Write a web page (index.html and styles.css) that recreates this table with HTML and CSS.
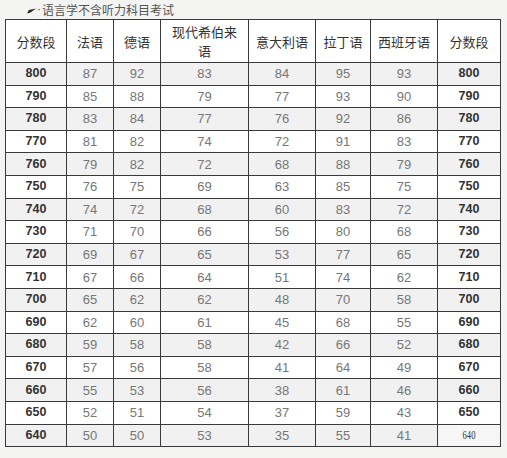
FILE: index.html
```html
<!DOCTYPE html>
<html>
<head>
<meta charset="utf-8">
<link rel="stylesheet" href="styles.css">
</head>
<body>
<div class="title">
  <svg class="title-icon" width="9" height="7" viewBox="0 0 9 7"><path d="M0 6.5 L1.8 3 L9 1.5 L3.5 5.5 Z" fill="#2a2a2a"/></svg>
  <span class="title-dot">·</span>
  <span>语言学不含听力科目考试</span>
</div>
<table class="score-table">
  <colgroup>
    <col class="c1"><col class="c2"><col class="c3"><col class="c4"><col class="c5"><col class="c6"><col class="c7"><col class="c8">
  </colgroup>
  <thead>
    <tr><th>分数段</th><th>法语</th><th>德语</th><th>现代希伯来<br>语</th><th>意大利语</th><th>拉丁语</th><th>西班牙语</th><th>分数段</th></tr>
  </thead>
  <tbody>
    <tr><td class="seg">800</td><td>87</td><td>92</td><td>83</td><td>84</td><td>95</td><td>93</td><td class="seg">800</td></tr>
    <tr><td class="seg">790</td><td>85</td><td>88</td><td>79</td><td>77</td><td>93</td><td>90</td><td class="seg">790</td></tr>
    <tr><td class="seg">780</td><td>83</td><td>84</td><td>77</td><td>76</td><td>92</td><td>86</td><td class="seg">780</td></tr>
    <tr><td class="seg">770</td><td>81</td><td>82</td><td>74</td><td>72</td><td>91</td><td>83</td><td class="seg">770</td></tr>
    <tr><td class="seg">760</td><td>79</td><td>82</td><td>72</td><td>68</td><td>88</td><td>79</td><td class="seg">760</td></tr>
    <tr><td class="seg">750</td><td>76</td><td>75</td><td>69</td><td>63</td><td>85</td><td>75</td><td class="seg">750</td></tr>
    <tr><td class="seg">740</td><td>74</td><td>72</td><td>68</td><td>60</td><td>83</td><td>72</td><td class="seg">740</td></tr>
    <tr><td class="seg">730</td><td>71</td><td>70</td><td>66</td><td>56</td><td>80</td><td>68</td><td class="seg">730</td></tr>
    <tr><td class="seg">720</td><td>69</td><td>67</td><td>65</td><td>53</td><td>77</td><td>65</td><td class="seg">720</td></tr>
    <tr><td class="seg">710</td><td>67</td><td>66</td><td>64</td><td>51</td><td>74</td><td>62</td><td class="seg">710</td></tr>
    <tr><td class="seg">700</td><td>65</td><td>62</td><td>62</td><td>48</td><td>70</td><td>58</td><td class="seg">700</td></tr>
    <tr><td class="seg">690</td><td>62</td><td>60</td><td>61</td><td>45</td><td>68</td><td>55</td><td class="seg">690</td></tr>
    <tr><td class="seg">680</td><td>59</td><td>58</td><td>58</td><td>42</td><td>66</td><td>52</td><td class="seg">680</td></tr>
    <tr><td class="seg">670</td><td>57</td><td>56</td><td>58</td><td>41</td><td>64</td><td>49</td><td class="seg">670</td></tr>
    <tr><td class="seg">660</td><td>55</td><td>53</td><td>56</td><td>38</td><td>61</td><td>46</td><td class="seg">660</td></tr>
    <tr><td class="seg">650</td><td>52</td><td>51</td><td>54</td><td>37</td><td>59</td><td>43</td><td class="seg">650</td></tr>
    <tr><td class="seg">640</td><td>50</td><td>50</td><td>53</td><td>35</td><td>55</td><td>41</td><td class="seg-alt"><span class="narrow">640</span></td></tr>
  </tbody>
</table>
</body>
</html>
```
FILE: styles.css
```css
html, body {
  margin: 0;
  padding: 0;
  background: #f4f4f2;
}
body {
  width: 507px;
  height: 458px;
  overflow: hidden;
}
.title {
  height: 19px;
  display: flex;
  align-items: center;
  padding-left: 27px;
  font-family: "Noto Sans CJK SC", "Liberation Sans", sans-serif;
  font-size: 12px;
  color: #555;
  line-height: 19px;
}
.title-icon {
  margin-top: 1px;
}
.title-dot {
  font-family: "Liberation Sans", sans-serif;
  margin: 0 1px 0 1px;
}
.score-table {
  margin-left: 5px;
  border-collapse: collapse;
  table-layout: fixed;
  width: 495px;
  background: #fff;
}
.c1 { width: 61px; }
.c2 { width: 47px; }
.c3 { width: 47px; }
.c4 { width: 88px; }
.c5 { width: 67px; }
.c6 { width: 55px; }
.c7 { width: 67px; }
.c8 { width: 63px; }
.score-table th,
.score-table td {
  border: 1px solid #3a3a3a;
  padding: 0;
  text-align: center;
  vertical-align: middle;
}
.score-table th {
  height: 42px;
  font-family: "Noto Sans CJK SC", sans-serif;
  font-weight: normal;
  font-size: 13px;
  line-height: 19px;
  color: #333;
}
.score-table td {
  height: 21.6px;
  font-family: "Liberation Sans", Arial, sans-serif;
  font-size: 13px;
  color: #777;
  line-height: 15px;
}
.score-table tbody tr:nth-child(odd) {
  background: #f1f1f1;
}
.score-table td.seg {
  font-weight: bold;
  color: #333;
  font-size: 12.5px;
}
.score-table td.seg-alt {
  font-family: "Liberation Serif", serif;
  font-size: 12px;
  color: #333;
  background: #f6f6f6;
}
.narrow {
  display: inline-block;
  transform: scaleX(0.72);
}
```
